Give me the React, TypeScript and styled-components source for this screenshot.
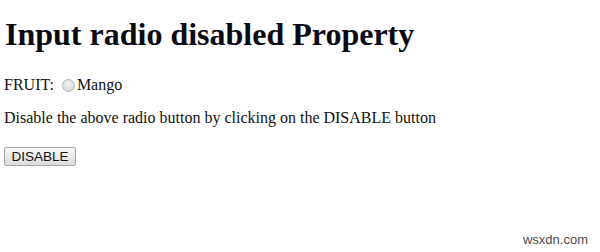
import styled, { createGlobalStyle } from "styled-components";

const GlobalStyle = createGlobalStyle`
  html, body {
    margin: 0;
    padding: 0;
    background: #ffffff;
  }
  body {
    font-family: "Liberation Serif", "Times New Roman", serif;
    color: #111111;
  }
`;

const Page = styled.div`
  position: relative;
  width: 600px;
  height: 252px;
  padding: 0 4px;
  box-sizing: border-box;
  overflow: hidden;
`;

const Title = styled.h1`
  margin: 16px 0 0 1px;
  font-size: 32px;
  line-height: 37px;
  font-weight: bold;
  color: #0a0a14;
`;

const Row = styled.div`
  display: flex;
  align-items: center;
  margin-top: 23px;
  font-size: 16px;
  line-height: 18px;
`;

const Radio = styled.input`
  appearance: none;
  width: 13px;
  height: 13px;
  margin: 0 2px 0 8px;
  border-radius: 50%;
  border: 1px solid #b4b4b4;
  background: radial-gradient(circle at 50% 35%, #f4f4f4 0%, #e2e2e2 55%, #cfcfcf 100%);
  box-sizing: border-box;
`;

const Text = styled.p`
  margin: 15px 0 0;
  font-size: 16px;
  line-height: 18px;
`;

const Button = styled.button`
  display: block;
  margin-top: 20px;
  width: 72px;
  height: 19px;
  padding: 0;
  border: 1px solid #a7a7a7;
  border-radius: 2px;
  background: linear-gradient(#f6f6f6, #dddddd);
  font-family: "Liberation Sans", Arial, sans-serif;
  font-size: 13.5px;
  color: #111111;
`;

const Watermark = styled.span`
  position: absolute;
  right: 12px;
  bottom: 5px;
  font-family: "Liberation Sans", Arial, sans-serif;
  font-size: 13px;
  color: #4a4a4a;
`;

export default function App() {
  return (
    <>
      <GlobalStyle />
      <Page>
        <Title>Input radio disabled Property</Title>
        <Row>
          FRUIT:
          <Radio type="radio" name="fruit" />
          Mango
        </Row>
        <Text>Disable the above radio button by clicking on the DISABLE button</Text>
        <Button>DISABLE</Button>
        <Watermark>wsxdn.com</Watermark>
      </Page>
    </>
  );
}
